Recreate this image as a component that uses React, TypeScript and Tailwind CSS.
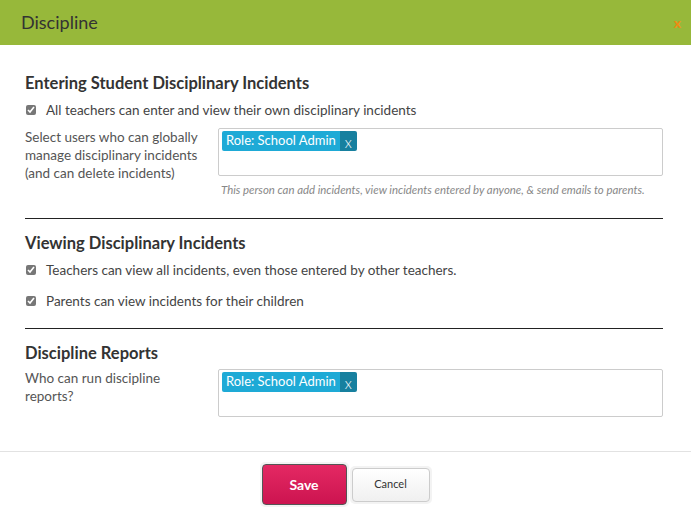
import React from "react";

const Tag = () => (
  <div className="flex h-[20px] items-stretch rounded-[2px] overflow-hidden text-white text-[13px] leading-[18px]">
    <span className="bg-[#1eaad6] pl-[4px] pr-[4px]">Role: School Admin</span>
    <span className="bg-[#17809f] px-[5px] text-[15px] leading-[23px] font-light">x</span>
  </div>
);

const Check = ({ label }: { label: string }) => (
  <label className="flex items-center gap-[10px] text-[13.5px] text-[#444]">
    <input type="checkbox" defaultChecked className="w-[10px] h-[10px] accent-[#777] ml-[1px]" />
    <span>{label}</span>
  </label>
);

export default function App() {
  return (
    <div className="w-[691px] h-[519px] bg-white flex flex-col" style={{ fontFamily: "Lato, 'Open Sans', sans-serif" }}>
      <div className="h-[45px] bg-[#97b83a] flex items-center justify-between pl-[21px] pr-[10px]">
        <h1 className="text-[18px] text-[#333]">Discipline</h1>
        <span className="text-[#f08a12] text-[14px] font-bold">x</span>
      </div>

      <div className="flex-1 px-[25px] pr-[28px] pt-[27px]">
        <h2 className="text-[16.5px] font-bold text-[#333] leading-[22px]">Entering Student Disciplinary Incidents</h2>
        <div className="mt-[6px]">
          <Check label="All teachers can enter and view their own disciplinary incidents" />
        </div>
        <div className="flex mt-[8px]">
          <p className="w-[193px] text-[13.5px] leading-[18px] text-[#555]">
            Select users who can globally manage disciplinary incidents (and can delete incidents)
          </p>
          <div className="flex-1">
            <div className="h-[48px] border border-[#ccc] rounded-[2px] px-[3px] pt-[2px] flex items-start">
              <Tag />
            </div>
            <p className="text-[11.4px] italic text-[#888] mt-[5px] pl-[3px]">
              This person can add incidents, view incidents entered by anyone, &amp; send emails to parents.
            </p>
          </div>
        </div>

        <div className="border-t border-[#222] mt-[20px]" />

        <h2 className="text-[16.5px] font-bold text-[#333] leading-[22px] mt-[13px]">Viewing Disciplinary Incidents</h2>
        <div className="mt-[6px] flex flex-col gap-[10px]">
          <Check label="Teachers can view all incidents, even those entered by other teachers." />
          <Check label="Parents can view incidents for their children" />
        </div>

        <div className="border-t border-[#222] mt-[17px]" />

        <h2 className="text-[16.5px] font-bold text-[#333] leading-[22px] mt-[13px]">Discipline Reports</h2>
        <div className="flex mt-[5px]">
          <p className="w-[193px] text-[13.5px] leading-[18px] text-[#555] pr-[40px]">Who can run discipline reports?</p>
          <div className="flex-1 h-[48px] border border-[#ccc] rounded-[2px] px-[3px] pt-[2px] flex items-start">
            <Tag />
          </div>
        </div>
      </div>

      <div className="h-[68px] border-t border-[#e2e2e2] flex items-center justify-center gap-[1px] pb-[2px]">
        <div className="p-[2px] bg-[#f3f3f3] rounded-[5px]">
          <button className="w-[85px] h-[41px] rounded-[4px] border border-[#555] bg-gradient-to-b from-[#e42863] to-[#cc1350] text-white font-bold text-[14px]">
            Save
          </button>
        </div>
        <div className="p-[2px] bg-[#f3f3f3] rounded-[5px]">
          <button className="w-[78px] h-[34px] rounded-[4px] border border-[#ccc] bg-gradient-to-b from-white to-[#f0f0f0] text-[#333] text-[11px]">
            Cancel
          </button>
        </div>
      </div>
    </div>
  );
}
